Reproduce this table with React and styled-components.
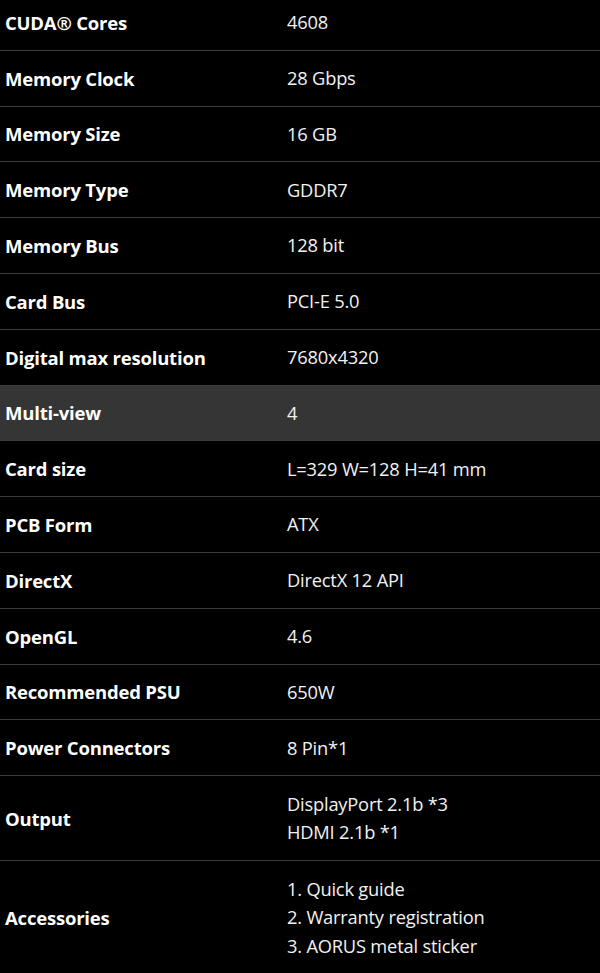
import styled, { createGlobalStyle } from "styled-components";

const specs = [
    { label: "CUDA® Cores", value: ["4608"] },
    { label: "Memory Clock", value: ["28 Gbps"] },
    { label: "Memory Size", value: ["16 GB"] },
    { label: "Memory Type", value: ["GDDR7"] },
    { label: "Memory Bus", value: ["128 bit"] },
    { label: "Card Bus", value: ["PCI-E 5.0"] },
    { label: "Digital max resolution", value: ["7680x4320"] },
    { label: "Multi-view", value: ["4"], active: true },
    { label: "Card size", value: ["L=329 W=128 H=41 mm"] },
    { label: "PCB Form", value: ["ATX"] },
    { label: "DirectX", value: ["DirectX 12 API"] },
    { label: "OpenGL", value: ["4.6"] },
    { label: "Recommended PSU", value: ["650W"] },
    { label: "Power Connectors", value: ["8 Pin*1"] },
    { label: "Output", value: ["DisplayPort 2.1b *3", "HDMI 2.1b *1"] },
    { label: "Accessories", value: ["1. Quick guide", "2. Warranty registration", "3. AORUS metal sticker"] },
];

export default function App() {
    return (
        <>
            <GlobalStyle />
            <Table>
                {specs.map((s) => (
                    <Row key={s.label} $active={s.active} $lines={s.value.length}>
                        <Label>{s.label}</Label>
                        <Value>
                            {s.value.map((v) => (
                                <span key={v}>{v}</span>
                            ))}
                        </Value>
                    </Row>
                ))}
            </Table>
        </>
    );
}

const GlobalStyle = createGlobalStyle`
    body {
        margin: 0;
        background: #000;
        font-family: "Open Sans", "Noto Sans", sans-serif;
        overflow: hidden;
    }
`;

const Table = styled.div`
    display: flex;
    flex-direction: column;
    margin-top: -5px;
    width: 600px;
`;

const Row = styled.div`
    display: grid;
    grid-template-columns: 287px 1fr;
    align-items: center;
    min-height: ${(p) => (p.$lines > 1 ? 28.5 * p.$lines + 27 : 54.8)}px;
    border-bottom: 1px solid #3c3c3c;
    background: ${(p) => (p.$active ? "#353535" : "#000")};
`;

const Label = styled.div`
    padding-left: 5px;
    color: #fff;
    font-weight: 700;
    font-size: 18.5px;
    letter-spacing: -0.2px;
`;

const Value = styled.div`
    display: flex;
    flex-direction: column;
    color: #f2f2f2;
    font-size: 18.3px;
    line-height: 28.5px;
    letter-spacing: -0.2px;
`;
